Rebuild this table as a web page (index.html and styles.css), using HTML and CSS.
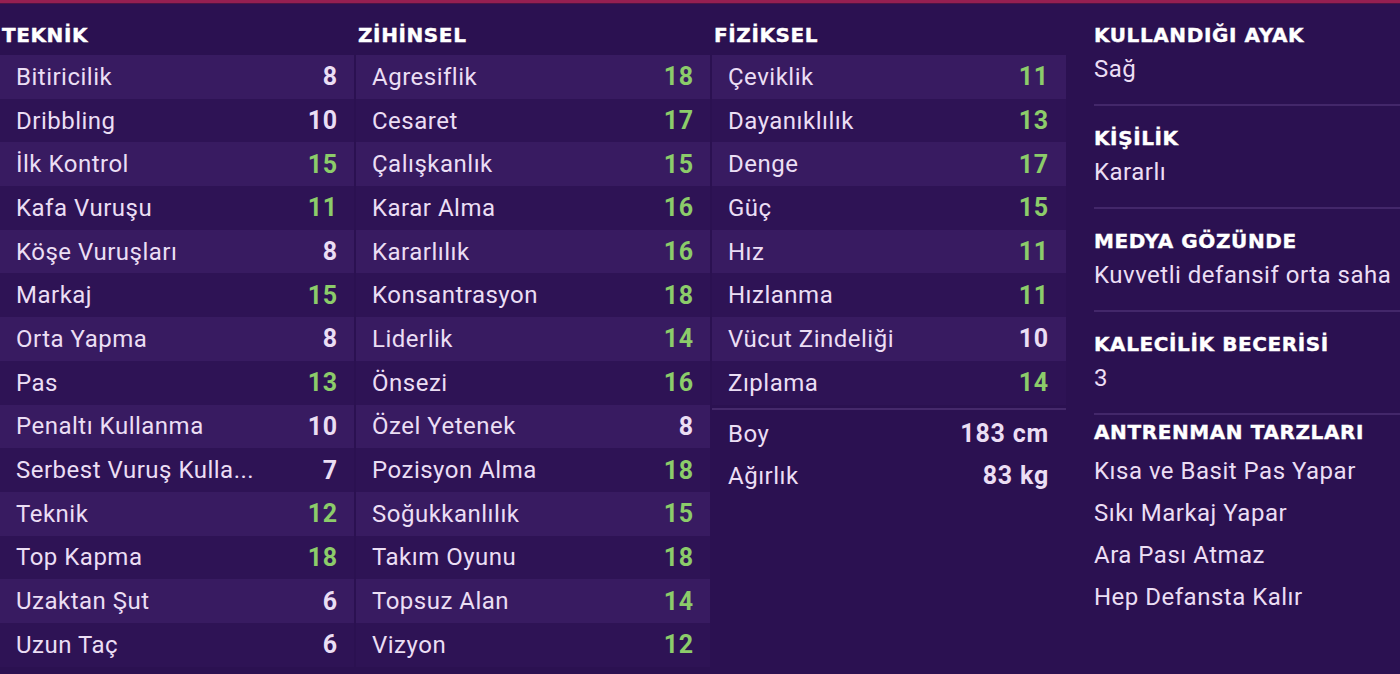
FILE: index.html
```html
<!DOCTYPE html>
<html lang="tr">
<head>
<meta charset="utf-8">
<title>Oyuncu Özellikleri</title>
<link rel="stylesheet" href="styles.css">
</head>
<body>
<div class="page">
  <section class="col">
    <h2 class="col-title">TEKNİK</h2>
    <div class="rows">
      <div class="row"><span class="lbl">Bitiricilik</span><span class="val">8</span></div>
      <div class="row"><span class="lbl">Dribbling</span><span class="val">10</span></div>
      <div class="row"><span class="lbl">İlk Kontrol</span><span class="val good">15</span></div>
      <div class="row"><span class="lbl">Kafa Vuruşu</span><span class="val good">11</span></div>
      <div class="row"><span class="lbl">Köşe Vuruşları</span><span class="val">8</span></div>
      <div class="row"><span class="lbl">Markaj</span><span class="val good">15</span></div>
      <div class="row"><span class="lbl">Orta Yapma</span><span class="val">8</span></div>
      <div class="row"><span class="lbl">Pas</span><span class="val good">13</span></div>
      <div class="row"><span class="lbl">Penaltı Kullanma</span><span class="val">10</span></div>
      <div class="row"><span class="lbl" title="Serbest Vuruş Kullanma">Serbest Vuruş Kulla...</span><span class="val">7</span></div>
      <div class="row"><span class="lbl">Teknik</span><span class="val good">12</span></div>
      <div class="row"><span class="lbl">Top Kapma</span><span class="val good">18</span></div>
      <div class="row"><span class="lbl">Uzaktan Şut</span><span class="val">6</span></div>
      <div class="row"><span class="lbl">Uzun Taç</span><span class="val">6</span></div>
    </div>
  </section>
  <section class="col">
    <h2 class="col-title">ZİHİNSEL</h2>
    <div class="rows">
      <div class="row"><span class="lbl">Agresiflik</span><span class="val good">18</span></div>
      <div class="row"><span class="lbl">Cesaret</span><span class="val good">17</span></div>
      <div class="row"><span class="lbl">Çalışkanlık</span><span class="val good">15</span></div>
      <div class="row"><span class="lbl">Karar Alma</span><span class="val good">16</span></div>
      <div class="row"><span class="lbl">Kararlılık</span><span class="val good">16</span></div>
      <div class="row"><span class="lbl">Konsantrasyon</span><span class="val good">18</span></div>
      <div class="row"><span class="lbl">Liderlik</span><span class="val good">14</span></div>
      <div class="row"><span class="lbl">Önsezi</span><span class="val good">16</span></div>
      <div class="row"><span class="lbl">Özel Yetenek</span><span class="val">8</span></div>
      <div class="row"><span class="lbl">Pozisyon Alma</span><span class="val good">18</span></div>
      <div class="row"><span class="lbl">Soğukkanlılık</span><span class="val good">15</span></div>
      <div class="row"><span class="lbl">Takım Oyunu</span><span class="val good">18</span></div>
      <div class="row"><span class="lbl">Topsuz Alan</span><span class="val good">14</span></div>
      <div class="row"><span class="lbl">Vizyon</span><span class="val good">12</span></div>
    </div>
  </section>
  <section class="col">
    <h2 class="col-title">FİZİKSEL</h2>
    <div class="rows">
      <div class="row"><span class="lbl">Çeviklik</span><span class="val good">11</span></div>
      <div class="row"><span class="lbl">Dayanıklılık</span><span class="val good">13</span></div>
      <div class="row"><span class="lbl">Denge</span><span class="val good">17</span></div>
      <div class="row"><span class="lbl">Güç</span><span class="val good">15</span></div>
      <div class="row"><span class="lbl">Hız</span><span class="val good">11</span></div>
      <div class="row"><span class="lbl">Hızlanma</span><span class="val good">11</span></div>
      <div class="row"><span class="lbl">Vücut Zindeliği</span><span class="val">10</span></div>
      <div class="row"><span class="lbl">Zıplama</span><span class="val good">14</span></div>
    </div>
    <div class="body-stats">
      <div class="stat"><span class="lbl">Boy</span><span class="val">183 cm</span></div>
      <div class="stat"><span class="lbl">Ağırlık</span><span class="val">83 kg</span></div>
    </div>
  </section>
  <aside class="info">
    <div class="info-block">
      <h3 class="info-title">KULLANDIĞI AYAK</h3>
      <p class="info-val">Sağ</p>
    </div>
    <div class="info-block">
      <h3 class="info-title">KİŞİLİK</h3>
      <p class="info-val">Kararlı</p>
    </div>
    <div class="info-block">
      <h3 class="info-title">MEDYA GÖZÜNDE</h3>
      <p class="info-val">Kuvvetli defansif orta saha</p>
    </div>
    <div class="info-block">
      <h3 class="info-title">KALECİLİK BECERİSİ</h3>
      <p class="info-val">3</p>
    </div>
    <div class="info-block last">
      <h3 class="info-title">ANTRENMAN TARZLARI</h3>
      <ul class="traits">
        <li>Kısa ve Basit Pas Yapar</li>
        <li>Sıkı Markaj Yapar</li>
        <li>Ara Pası Atmaz</li>
        <li>Hep Defansta Kalır</li>
      </ul>
    </div>
  </aside>
</div>
</body>
</html>
```

FILE: styles.css
```css
* { box-sizing: border-box; }

html, body {
  margin: 0;
  padding: 0;
  height: 100%;
}

body {
  background: #2b1151;
  color: #ebdef4;
  font-family: Roboto, "Liberation Sans", sans-serif;
  font-size: 24px;
  letter-spacing: 0.5px;
  overflow: hidden;
}

.page {
  display: flex;
  border-top: 3px solid #951f51;
  box-shadow: inset 0 1px 0 #4a1545;
  height: 674px;
}

.col {
  width: 354px;
  margin-right: 2px;
  flex: none;
}

.col:nth-child(3) {
  margin-right: 28px;
}

.col-title,
.info-title {
  margin: 0;
  font-family: "DejaVu Sans", sans-serif;
  font-weight: 700;
  font-size: 20px;
  line-height: 24px;
  color: #ffffff;
  letter-spacing: 0.6px;
  -webkit-text-stroke: 0.4px #ffffff;
}

.col-title {
  height: 52px;
  padding: 20px 0 0 2px;
}

.row {
  height: 43.7px;
  display: flex;
  align-items: center;
  justify-content: space-between;
  padding: 0 16px 0 16px;
  background: #2e1355;
}

.row:nth-child(odd) {
  background: #381b61;
}

.lbl {
  white-space: nowrap;
}

.val {
  font-weight: 700;
  font-size: 25px;
  letter-spacing: 0.8px;
  color: #ebdef4;
}

.val.good {
  color: #8ccc6a;
}

.col:nth-child(3) .row {
  padding-right: 17px;
}

.body-stats {
  margin-top: 3px;
  border-top: 2px solid #45296b;
  padding: 3px 17px 0 16px;
}

.stat {
  height: 42px;
  display: flex;
  align-items: center;
  justify-content: space-between;
}

.info {
  flex: 1;
  min-width: 0;
}

.info-block {
  border-bottom: 2px solid #43276a;
  height: 103px;
  padding-top: 20px;
}

.info-block.last {
  border-bottom: none;
  height: auto;
  padding-top: 5px;
}

.info-val {
  margin: 0;
  padding-top: 10px;
  line-height: 24px;
}

.traits {
  list-style: none;
  margin: 6px 0 0 0;
  padding: 0;
}

.traits li {
  height: 42px;
  line-height: 42px;
}
```
